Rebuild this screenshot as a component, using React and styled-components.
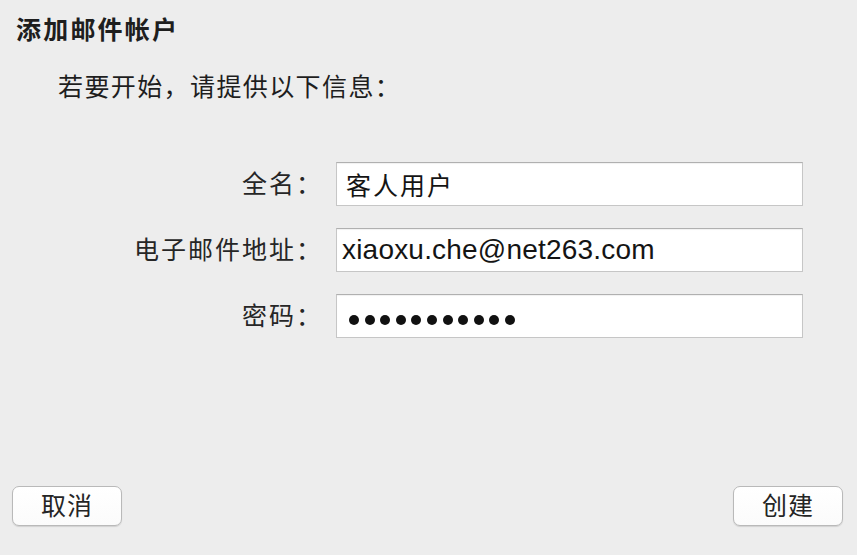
import styled, { createGlobalStyle } from 'styled-components';

const GlobalStyle = createGlobalStyle`
    html,
    body {
        margin: 0;
        padding: 0;
        background: #ededed;
    }
    * {
        box-sizing: border-box;
    }
`;

const Window = styled.div`
    height: 555px;
    width: 857px;
    display: flex;
    flex-direction: column;
    padding: 0 14px 29px 12px;
    background: #ededed;
    font-family: 'Liberation Sans', 'Noto Sans CJK SC', sans-serif;
    color: #1e1e1e;
    overflow: hidden;
`;

const Title = styled.h1`
    margin: 15px 0 0 4px;
    font-size: 25px;
    line-height: 30px;
    font-weight: 700;
    letter-spacing: 2.2px;
`;

const Intro = styled.p`
    margin: 27px 0 0 46px;
    font-size: 25px;
    line-height: 30px;
    font-weight: 400;
    letter-spacing: 1.4px;
`;

const Form = styled.div`
    margin-top: 60px;
    padding-right: 40px;
    display: grid;
    grid-template-columns: 304px 1fr;
    column-gap: 20px;
    row-gap: 22px;
`;

const Label = styled.label`
    display: flex;
    align-items: center;
    justify-content: flex-end;
    margin-right: -7px;
    font-size: 25px;
    line-height: 30px;
    letter-spacing: 2px;
    color: #262626;
`;

const Field = styled.div`
    height: 44px;
    display: flex;
    align-items: center;
    padding-left: ${({ latin }) => (latin ? '5px' : '9px')};
    background: #fff;
    border: 1px solid #c6c6c6;
    border-top-color: #b0b0b0;
    box-shadow: inset 0 1px 1px rgba(0, 0, 0, 0.06);
    font-size: ${({ latin }) => (latin ? '28px' : '25px')};
    letter-spacing: ${({ latin }) => (latin ? '0.2px' : '2px')};
    color: #141414;
    white-space: nowrap;
`;

const Dots = styled.div`
    display: flex;
    gap: 5.6px;
    margin: 7px 0 0 3px;
`;

const Dot = styled.span`
    width: 10px;
    height: 10px;
    border-radius: 50%;
    background: #111;
`;

const Footer = styled.div`
    margin-top: auto;
    display: flex;
    justify-content: space-between;
`;

const Button = styled.button`
    width: 110px;
    height: 40px;
    padding: 0;
    border: 1px solid #b9b9b9;
    border-radius: 7px;
    background: linear-gradient(#ffffff, #fbfbfb);
    box-shadow: 0 1px 1px rgba(0, 0, 0, 0.12);
    font-family: inherit;
    font-size: 25px;
    line-height: 1;
    letter-spacing: 1px;
    color: #252525;
    cursor: pointer;
`;

const App = () => {
    const fields = [
        { label: '全名：', value: '客人用户' },
        { label: '电子邮件地址：', value: 'xiaoxu.che@net263.com', latin: true },
        { label: '密码：', password: 11 },
    ];

    return (
        <Window>
            <GlobalStyle />
            <Title>添加邮件帐户</Title>
            <Intro>若要开始，请提供以下信息：</Intro>
            <Form>
                {fields.map((f) => (
                    <>
                        <Label key={f.label + 'l'}>{f.label}</Label>
                        <Field key={f.label + 'f'} latin={f.latin}>
                            {f.password ? (
                                <Dots>
                                    {Array.from({ length: f.password }).map((_, i) => (
                                        <Dot key={i} />
                                    ))}
                                </Dots>
                            ) : (
                                f.value
                            )}
                        </Field>
                    </>
                ))}
            </Form>
            <Footer>
                <Button>取消</Button>
                <Button>创建</Button>
            </Footer>
        </Window>
    );
};

export default App;
